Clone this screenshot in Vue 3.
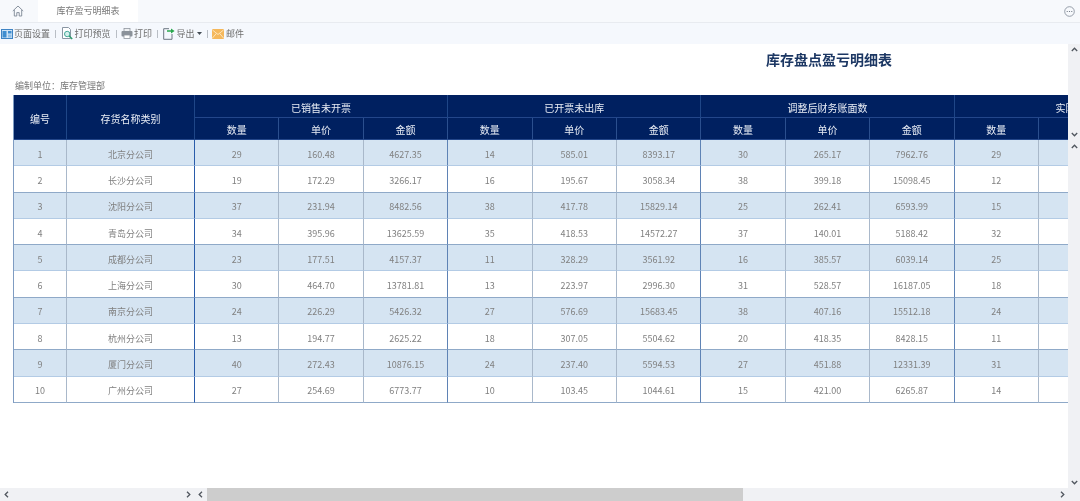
<script setup>
const groups = ['已销售未开票', '已开票未出库', '调整后财务账面数', '实际盘点数']
const subHeads = groups.flatMap(() => ['数量', '单价', '金额'])
const rows = [
  ['北京分公司', 29, '160.48', '4627.35', 14, '585.01', '8393.17', 30, '265.17', '7962.76', 29],
  ['长沙分公司', 19, '172.29', '3266.17', 16, '195.67', '3058.34', 38, '399.18', '15098.45', 12],
  ['沈阳分公司', 37, '231.94', '8482.56', 38, '417.78', '15829.14', 25, '262.41', '6593.99', 15],
  ['青岛分公司', 34, '395.96', '13625.59', 35, '418.53', '14572.27', 37, '140.01', '5188.42', 32],
  ['成都分公司', 23, '177.51', '4157.37', 11, '328.29', '3561.92', 16, '385.57', '6039.14', 25],
  ['上海分公司', 30, '464.70', '13781.81', 13, '223.97', '2996.30', 31, '528.57', '16187.05', 18],
  ['南京分公司', 24, '226.29', '5426.32', 27, '576.69', '15683.45', 38, '407.16', '15512.18', 24],
  ['杭州分公司', 13, '194.77', '2625.22', 18, '307.05', '5504.62', 20, '418.35', '8428.15', 11],
  ['厦门分公司', 40, '272.43', '10876.15', 24, '237.40', '5594.53', 27, '451.88', '12331.39', 31],
  ['广州分公司', 27, '254.69', '6773.77', 10, '103.45', '1044.61', 15, '421.00', '6265.87', 14]
].map((r) => [...r, '', ''])

const cellClass = (j) => ({
  frozen: j === 0,
  group: j > 0 && j % 3 === 0
})
</script>

<template>
  <div class="app">
    <header class="tabbar">
      <span class="home">
        <svg width="12" height="12" viewBox="0 0 12 12" fill="none" stroke="#7d8794" stroke-width="0.9">
          <path d="M0.8 6 L6 1 L11.2 6 M2.3 5 V11 H4.8 V7.6 H7.2 V11 H9.7 V5" />
        </svg>
      </span>
      <span class="tab">库存盈亏明细表</span>
      <span class="more">
        <svg width="11" height="11" viewBox="0 0 11 11" fill="none">
          <circle cx="5.5" cy="5.5" r="4.8" stroke="#7d8794" stroke-width="0.8" />
          <circle cx="3.2" cy="5.5" r="0.6" fill="#5d6774" />
          <circle cx="5.5" cy="5.5" r="0.6" fill="#5d6774" />
          <circle cx="7.8" cy="5.5" r="0.6" fill="#5d6774" />
        </svg>
      </span>
    </header>

    <nav class="toolbar">
      <span class="tool tight">
        <svg width="12" height="10" viewBox="0 0 12 10">
          <rect x="0.5" y="0.5" width="11" height="9" fill="#cfe3f5" stroke="#3f84c4" />
          <rect x="1.5" y="2" width="4" height="6.5" fill="#3f8ed0" />
          <rect x="7" y="2" width="3.5" height="2.5" fill="#3f8ed0" />
          <rect x="7" y="5.5" width="3.5" height="3" fill="#8fc0e8" />
        </svg>
        页面设置
      </span>
      <i class="sep"></i>
      <span class="tool tight">
        <svg width="13" height="13" viewBox="0 0 13 13" fill="none">
          <path d="M1.5 0.5 H7.5 L9.5 2.5 V11.5 H1.5 Z" fill="#fff" stroke="#8a96a3" />
          <circle cx="6.2" cy="7" r="2.7" fill="#d6f0ec" stroke="#45a89a" />
          <path d="M8.2 9 L11.2 12" stroke="#2f9c6e" stroke-width="1.6" />
        </svg>
        打印预览
      </span>
      <i class="sep"></i>
      <span class="tool tight">
        <svg width="12" height="11" viewBox="0 0 12 11">
          <rect x="3" y="0.5" width="6" height="3" fill="#eef0f2" stroke="#8f969e" stroke-width="0.8" />
          <rect x="0.5" y="3" width="11" height="5.5" rx="1" fill="#8b929a" />
          <rect x="3" y="7" width="6" height="3.5" fill="#fff" stroke="#8f969e" stroke-width="0.8" />
        </svg>
        打印
      </span>
      <i class="sep"></i>
      <span class="tool">
        <svg width="12" height="12" viewBox="0 0 12 12" fill="none">
          <path d="M6 0.7 H0.7 V11.3 H9 V6" stroke="#6d7782" />
          <path d="M4 2.2 H8 V0.4 L11.6 3 L8 5.6 V3.8 H4 Z" fill="#2aa84e" />
        </svg>
        导出
        <svg width="5" height="3" viewBox="0 0 5 3"><path d="M0 0 H5 L2.5 3 Z" fill="#444c55" /></svg>
      </span>
      <i class="sep"></i>
      <span class="tool">
        <svg width="12" height="10" viewBox="0 0 12 10" fill="none">
          <rect width="12" height="10" rx="1" fill="#f5b85c" />
          <path d="M0.5 1 L6 5.5 L11.5 1 M0.5 9 L4.4 4.4 M11.5 9 L7.6 4.4" stroke="#fde9c4" stroke-width="0.9" />
        </svg>
        邮件
      </span>
    </nav>

    <div class="body">
      <main class="content">
        <h1 class="title">库存盘点盈亏明细表</h1>
        <p class="unit">编制单位：库存管理部</p>
        <div class="grid">
          <div class="h head-id">编号</div>
          <div class="h head-name">存货名称类别</div>
          <div v-for="g in groups" :key="g" class="h head-group">{{ g }}</div>
          <div
            v-for="(s, i) in subHeads"
            :key="i"
            class="h head-sub"
          >{{ s }}</div>
          <template v-for="(r, i) in rows" :key="i">
            <div class="c" :class="{ odd: i % 2 === 0 }">{{ i + 1 }}</div>
            <div
              v-for="(v, j) in r"
              :key="j"
              class="c"
              :class="[{ odd: i % 2 === 0 }, cellClass(j)]"
            >{{ v }}</div>
          </template>
        </div>
      </main>
      <aside class="vbar">
        <div class="vpane top-pane">
          <svg class="chev" width="7" height="5" viewBox="0 0 7 5"><path d="M0.8 4 L3.5 1.2 L6.2 4" /></svg>
          <svg class="chev" width="7" height="5" viewBox="0 0 7 5"><path d="M0.8 1 L3.5 3.8 L6.2 1" /></svg>
        </div>
        <div class="vpane bottom-pane">
          <svg class="chev" width="7" height="5" viewBox="0 0 7 5"><path d="M0.8 4 L3.5 1.2 L6.2 4" /></svg>
          <svg class="chev" width="7" height="5" viewBox="0 0 7 5"><path d="M0.8 1 L3.5 3.8 L6.2 1" /></svg>
        </div>
      </aside>
    </div>

    <footer class="hbar">
      <div class="hleft">
        <svg class="chev" width="5" height="7" viewBox="0 0 5 7"><path d="M4 0.8 L1.2 3.5 L4 6.2" /></svg>
        <svg class="chev" width="5" height="7" viewBox="0 0 5 7"><path d="M1 0.8 L3.8 3.5 L1 6.2" /></svg>
      </div>
      <div class="hright">
        <svg class="chev" width="5" height="7" viewBox="0 0 5 7"><path d="M4 0.8 L1.2 3.5 L4 6.2" /></svg>
        <div class="thumb"></div>
        <svg class="chev end" width="5" height="7" viewBox="0 0 5 7"><path d="M1 0.8 L3.8 3.5 L1 6.2" /></svg>
      </div>
    </footer>
  </div>
</template>

<style scoped>
.app {
  width: 1080px;
  height: 501px;
  display: flex;
  flex-direction: column;
  overflow: hidden;
  background: #fff;
  font-family: "Noto Sans CJK SC", "Noto Sans", sans-serif;
  color: #666;
  filter: blur(0.35px);
}
.tabbar {
  height: 22px;
  flex: none;
  display: flex;
  align-items: center;
  background: #f7f9fc;
  border-bottom: 1px solid #e8ebf0;
}
.home {
  width: 36px;
  margin-right: 2px;
  display: flex;
  justify-content: center;
}
.tab {
  width: 100px;
  height: 22px;
  line-height: 21px;
  background: #fff;
  text-align: center;
  font-size: 9px;
  color: #777;
}
.more {
  margin-left: auto;
  margin-right: 5px;
  display: flex;
}
.toolbar {
  height: 21px;
  flex: none;
  display: flex;
  align-items: center;
  padding-left: 1px;
  background: #f5f8fd;
  font-size: 9px;
  color: #6e6e6e;
}
.tool {
  display: flex;
  align-items: center;
  gap: 2px;
}
.tool.tight {
  gap: 1px;
}
.sep {
  width: 1px;
  height: 8px;
  margin: 0 4.5px 0 5px;
  background: #b9bec5;
}
.body {
  flex: 1;
  min-height: 0;
  display: flex;
}
.content {
  flex: 1;
  min-width: 0;
  overflow: hidden;
  padding-left: 13px;
}
.title {
  margin: 6px 0 0;
  padding-left: 753px;
  height: 18px;
  line-height: 18px;
  font-size: 14px;
  font-weight: 700;
  color: #1c3763;
  white-space: nowrap;
}
.unit {
  margin: 10px 0 1px 2px;
  height: 16px;
  line-height: 16px;
  font-size: 9px;
  color: #777;
}
.grid {
  display: grid;
  width: 1195px;
  grid-template-columns: 53px 128px repeat(12, 84.4px);
  grid-template-rows: 23px 22px;
  grid-auto-rows: 26.3px;
  border-left: 1px solid #7f9cc2;
  box-sizing: border-box;
}
.h {
  display: flex;
  align-items: center;
  justify-content: center;
  padding-top: 2px;
  background: #002060;
  color: #e8edf5;
  font-size: 10px;
  border-right: 1px solid #1f4687;
  border-bottom: 1px solid #23468a;
  box-sizing: border-box;
}
.head-id,
.head-name {
  grid-row: span 2;
}
.head-group {
  grid-column: span 3;
}
.head-sub {
  border-right-color: #2b4f8e;
}
.c {
  display: flex;
  align-items: center;
  justify-content: center;
  padding-top: 3px;
  font-size: 9px;
  color: #808080;
  background: #fff;
  border-right: 1px solid #a9b8ca;
  border-bottom: 1px solid #8fa9c8;
  box-sizing: border-box;
}
.c.odd {
  background: #d5e4f2;
  border-bottom-color: #b3cbe5;
}
.c.frozen {
  border-right-color: #2a5cab;
}
.c.group {
  border-right-color: #5f83b5;
}
.vbar {
  width: 12px;
  flex: none;
  display: flex;
  flex-direction: column;
  background: #f0f1f4;
}
.vpane {
  display: flex;
  flex-direction: column;
  align-items: center;
  justify-content: space-between;
}
.top-pane {
  height: 96px;
  padding: 3px 0 3px;
  box-sizing: border-box;
}
.bottom-pane {
  flex: 1;
  padding: 4px 0 3px;
}
.chev {
  display: block;
  fill: none;
  stroke: #50565e;
  stroke-width: 1.3;
  flex: none;
}
.hbar {
  height: 13px;
  flex: none;
  display: flex;
  background: #f0f1f4;
}
.hleft {
  width: 195px;
  flex: none;
  display: flex;
  align-items: center;
  justify-content: space-between;
  padding: 0 4px;
  box-sizing: border-box;
}
.hright {
  flex: 1;
  display: flex;
  align-items: center;
  padding-left: 3px;
}
.thumb {
  width: 536px;
  height: 13px;
  margin-left: 4px;
  background: #cdcdcd;
}
.end {
  margin-left: auto;
  margin-right: 15px;
}
</style>

<style>
html, body {
  margin: 0;
  background: #fff;
}
</style>
